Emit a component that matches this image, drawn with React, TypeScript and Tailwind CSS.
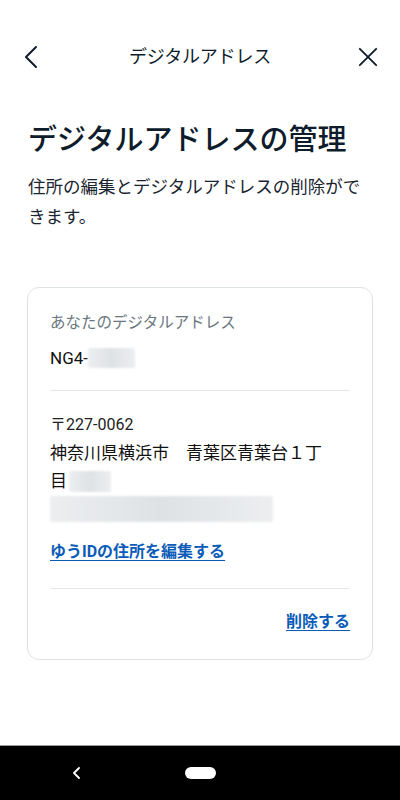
import React from 'react';

const font = { fontFamily: 'Roboto, "Noto Sans CJK JP", "Noto Sans", sans-serif' };

const Blur: React.FC<{ className?: string }> = ({ className }) => (
  <span
    className={`inline-block rounded-[2px] bg-gradient-to-r from-[#eceef0] via-[#dfe2e5] to-[#eceef0] blur-[1px] ${className ?? ''}`}
  />
);

const App: React.FC = () => {
  return (
    <div className="flex h-[800px] w-[400px] flex-col bg-white text-[#0e1c2b]" style={font}>
      <header className="mt-[29px] flex h-[56px] items-center justify-between px-[22px]">
        <button className="flex h-[24px] w-[20px] items-center">
          <svg width="18" height="24" viewBox="0 0 18 24" fill="none">
            <path d="M14 2 L4 12 L14 22" stroke="#0e1c2b" strokeWidth="2" strokeLinecap="round" strokeLinejoin="round" />
          </svg>
        </button>
        <h1 className="text-[18px] leading-none tracking-[-0.2px]">デジタルアドレス</h1>
        <button className="flex h-[24px] w-[20px] items-center justify-end">
          <svg width="22" height="22" viewBox="0 0 22 22" fill="none">
            <path d="M2 2 L20 20 M20 2 L2 20" stroke="#0e1c2b" strokeWidth="2" strokeLinecap="round" />
          </svg>
        </button>
      </header>

      <main className="flex-1 px-[28px]">
        <h2 className="mt-[35px] text-[29px] leading-[40px] font-medium">デジタルアドレスの管理</h2>
        <p className="mt-[12px] text-[17.5px] leading-[30px] text-[#1a2530]">
          住所の編集とデジタルアドレスの削除ができます。
        </p>

        <section className="-mx-px mt-[55px] rounded-[12px] border border-[#dde2e5] px-[22px] pt-[23px] pb-[25px]">
          <div className="text-[15.5px] leading-[24px] text-[#6b7780]">あなたのデジタルアドレス</div>
          <div className="mt-[11px] flex items-center text-[17px] leading-[24px] text-[#111]">
            NG4-
            <Blur className="h-[20px] w-[47px]" />
          </div>

          <div className="mt-[20px] h-px bg-[#e3e7e9]" />

          <div className="mt-[22px] text-[16px] leading-[24px] text-[#222]">〒227-0062</div>
          <div className="mt-[2px] text-[17px] leading-[28px] text-[#111]">
            <div>神奈川県横浜市　青葉区青葉台１丁</div>
            <div className="flex items-center">
              目
              <Blur className="ml-[2px] h-[21px] w-[42px]" />
            </div>
            <Blur className="mt-[1px] h-[26px] w-[223px]" />
          </div>

          <a href="#" className="mt-[10px] inline-block text-[16px] leading-[24px] font-bold text-[#0b5cb8] underline underline-offset-[3px]">
            ゆうIDの住所を編集する
          </a>

          <div className="mt-[24px] h-px bg-[#e3e7e9]" />

          <div className="mt-[21px] flex justify-end">
            <a href="#" className="text-[16px] leading-[24px] font-bold text-[#0b5cb8] underline underline-offset-[3px]">
              削除する
            </a>
          </div>
        </section>
      </main>

      <nav className="relative flex h-[55px] items-center border-t border-[#9a9a9a] bg-black">
        <svg className="absolute left-[72px] top-[21px]" width="10" height="12" viewBox="0 0 10 12" fill="none">
          <path d="M7 1 L2 6 L7 11" stroke="#fff" strokeWidth="1.8" strokeLinecap="round" strokeLinejoin="round" />
        </svg>
        <div className="mx-auto h-[12px] w-[31px] rounded-full bg-white" />
      </nav>
    </div>
  );
};

export default App;
